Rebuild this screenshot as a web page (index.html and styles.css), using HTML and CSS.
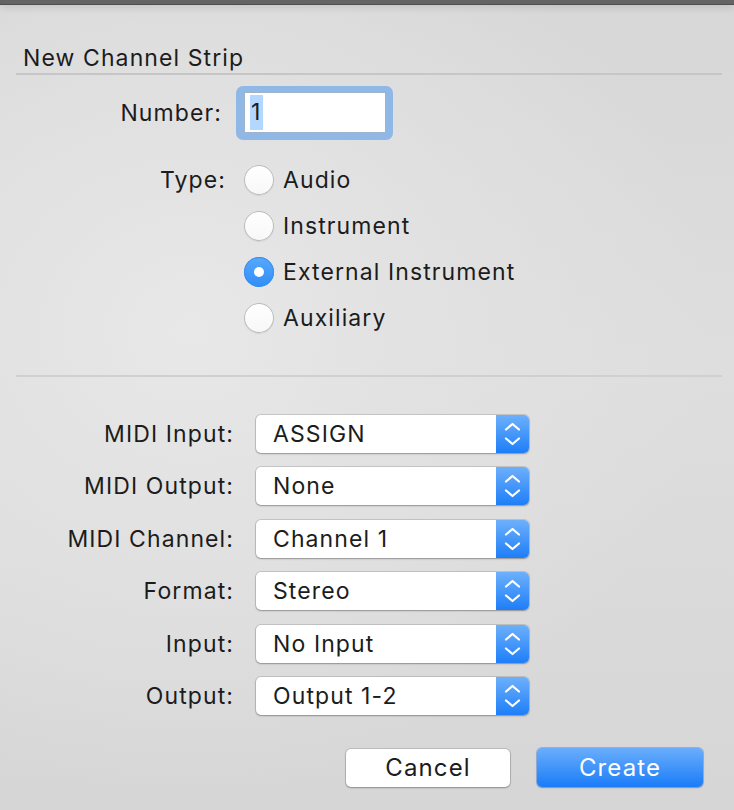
FILE: index.html
```html
<!DOCTYPE html>
<html>
<head>
<meta charset="utf-8">
<title>New Channel Strip</title>
<link rel="stylesheet" href="styles.css">
</head>
<body>
<div class="topbar"></div>
<div class="dialog">
  <div class="title">New Channel Strip</div>
  <div class="divider"></div>

  <div class="top-form">
    <div class="label num-label">Number:</div>
    <div class="field-ring"><div class="field"><span class="sel">1</span></div></div>

    <div class="label type-label">Type:</div>
    <div class="radios">
      <div class="radio-row"><span class="radio"></span><span>Audio</span></div>
      <div class="radio-row"><span class="radio"></span><span>Instrument</span></div>
      <div class="radio-row"><span class="radio on"></span><span>External Instrument</span></div>
      <div class="radio-row"><span class="radio"></span><span>Auxiliary</span></div>
    </div>
  </div>

  <div class="divider light"></div>

  <div class="popups">
    <div class="label">MIDI Input:</div>
    <div class="popup"><span class="pv">ASSIGN</span><span class="arrows"><svg width="33" height="38" viewBox="0 0 33 38"><path d="M10 14.5 L16.5 9 L23 14.5 M10 23.5 L16.5 29 L23 23.5" fill="none" stroke="#fff" stroke-width="2.2" stroke-linecap="round" stroke-linejoin="round"/></svg></span></div>
    <div class="label">MIDI Output:</div>
    <div class="popup"><span class="pv">None</span><span class="arrows"><svg width="33" height="38" viewBox="0 0 33 38"><path d="M10 14.5 L16.5 9 L23 14.5 M10 23.5 L16.5 29 L23 23.5" fill="none" stroke="#fff" stroke-width="2.2" stroke-linecap="round" stroke-linejoin="round"/></svg></span></div>
    <div class="label">MIDI Channel:</div>
    <div class="popup"><span class="pv">Channel 1</span><span class="arrows"><svg width="33" height="38" viewBox="0 0 33 38"><path d="M10 14.5 L16.5 9 L23 14.5 M10 23.5 L16.5 29 L23 23.5" fill="none" stroke="#fff" stroke-width="2.2" stroke-linecap="round" stroke-linejoin="round"/></svg></span></div>
    <div class="label">Format:</div>
    <div class="popup"><span class="pv">Stereo</span><span class="arrows"><svg width="33" height="38" viewBox="0 0 33 38"><path d="M10 14.5 L16.5 9 L23 14.5 M10 23.5 L16.5 29 L23 23.5" fill="none" stroke="#fff" stroke-width="2.2" stroke-linecap="round" stroke-linejoin="round"/></svg></span></div>
    <div class="label">Input:</div>
    <div class="popup"><span class="pv">No Input</span><span class="arrows"><svg width="33" height="38" viewBox="0 0 33 38"><path d="M10 14.5 L16.5 9 L23 14.5 M10 23.5 L16.5 29 L23 23.5" fill="none" stroke="#fff" stroke-width="2.2" stroke-linecap="round" stroke-linejoin="round"/></svg></span></div>
    <div class="label">Output:</div>
    <div class="popup"><span class="pv">Output 1-2</span><span class="arrows"><svg width="33" height="38" viewBox="0 0 33 38"><path d="M10 14.5 L16.5 9 L23 14.5 M10 23.5 L16.5 29 L23 23.5" fill="none" stroke="#fff" stroke-width="2.2" stroke-linecap="round" stroke-linejoin="round"/></svg></span></div>
  </div>

  <div class="buttons">
    <div class="btn cancel">Cancel</div>
    <div class="btn create">Create</div>
  </div>
</div>
</body>
</html>
```
FILE: styles.css
```css
* { box-sizing: border-box; }
html, body {
  margin: 0;
  padding: 0;
  width: 734px;
  height: 810px;
  overflow: hidden;
}
body {
  font-family: Inter, "Liberation Sans", sans-serif;
  font-size: 23px;
  letter-spacing: 1.1px;
  color: #1c1c1c;
  background:
    radial-gradient(ellipse 520px 460px at 190px 330px, #e8e8e8 0%, #e2e2e2 40%, rgba(216,216,216,0) 100%),
    linear-gradient(#d7d7d7, #dedede 45%, #d6d6d6);
}
.topbar {
  height: 5px;
  background: #646464;
  border-bottom: 1px solid #4e4e4e;
  box-shadow: 0 1px 8px rgba(0,0,0,0.18);
}
.dialog {
  position: relative;
}
.title {
  margin-top: 39px;
  height: 28px;
  line-height: 28px;
  padding-left: 23px;
}
.divider {
  margin: 1px 12px 0 16px;
  height: 2px;
  background: #c6c6c6;
}
.divider.light {
  margin-top: 42px;
  background: #d0d0d0;
}
.top-form {
  display: grid;
  grid-template-columns: 226px auto;
  column-gap: 10px;
  row-gap: 25px;
  margin-top: 11px;
  align-items: start;
}
.label {
  text-align: right;
  white-space: nowrap;
}
.num-label {
  line-height: 54px;
  padding-right: 4px;
}
.type-label {
  line-height: 30px;
}
.field-ring {
  width: 157px;
  height: 54px;
  background: #8fb8e7;
  border-radius: 7px;
  padding: 6px 7px 7px 8px;
}
.field {
  width: 100%;
  height: 100%;
  background: #fff;
  border: 1px solid #9fb4cc;
  padding-left: 5px;
  display: flex;
  align-items: center;
}
.sel {
  background: #b3d7ff;
  line-height: 35px;
  padding: 0 2px 0 1px;
}
.radios {
  display: flex;
  flex-direction: column;
  gap: 16px;
  padding-left: 8px;
}
.radio-row {
  display: flex;
  align-items: center;
  height: 30px;
  gap: 9px;
}
.radio {
  width: 30px;
  height: 30px;
  border-radius: 50%;
  background: linear-gradient(#ffffff, #f7f7f7);
  box-shadow: inset 0 0 0 1px #b9b9b9, 0 1px 1px rgba(0,0,0,0.08);
  position: relative;
  flex: none;
}
.radio.on {
  background: linear-gradient(#58a8fc, #2f8ef8);
  box-shadow: inset 0 0 0 1px #3a8ef0;
}
.radio.on::after {
  content: "";
  position: absolute;
  left: 10px;
  top: 10px;
  width: 10px;
  height: 10px;
  border-radius: 50%;
  background: #fff;
}
.popups {
  display: grid;
  grid-template-columns: 234px 273px;
  column-gap: 22px;
  row-gap: 14.4px;
  margin-top: 38px;
}
.popups .label {
  line-height: 38px;
}
.popup {
  height: 38px;
  background: #fff;
  border-radius: 5px;
  box-shadow: 0 0 0 1px rgba(0,0,0,0.12), 0 1px 2px rgba(0,0,0,0.25);
  display: flex;
  align-items: center;
  overflow: hidden;
}
.pv {
  flex: 1;
  padding-left: 17px;
  white-space: nowrap;
}
.arrows {
  width: 33px;
  height: 38px;
  background: linear-gradient(#6db0fc, #1e7ef8);
  flex: none;
  display: block;
}
.arrows svg { display: block; }
.buttons {
  display: flex;
  justify-content: flex-end;
  gap: 27px;
  padding-right: 31px;
  margin-top: 34px;
}
.btn {
  height: 38px;
  line-height: 38px;
  border-radius: 5px;
  text-align: center;
  font-size: 24px;
}
.cancel {
  width: 164px;
  background: #fff;
  box-shadow: 0 0 0 1px rgba(0,0,0,0.12), 0 1px 2px rgba(0,0,0,0.25);
}
.create {
  width: 166px;
  color: #fff;
  background: linear-gradient(#6aaefc, #1a7cf8);
  box-shadow: 0 0 0 1px rgba(30,110,230,0.35), 0 1px 2px rgba(0,0,0,0.2);
  margin-top: -1px;
  height: 39px;
  line-height: 39px;
}
```
